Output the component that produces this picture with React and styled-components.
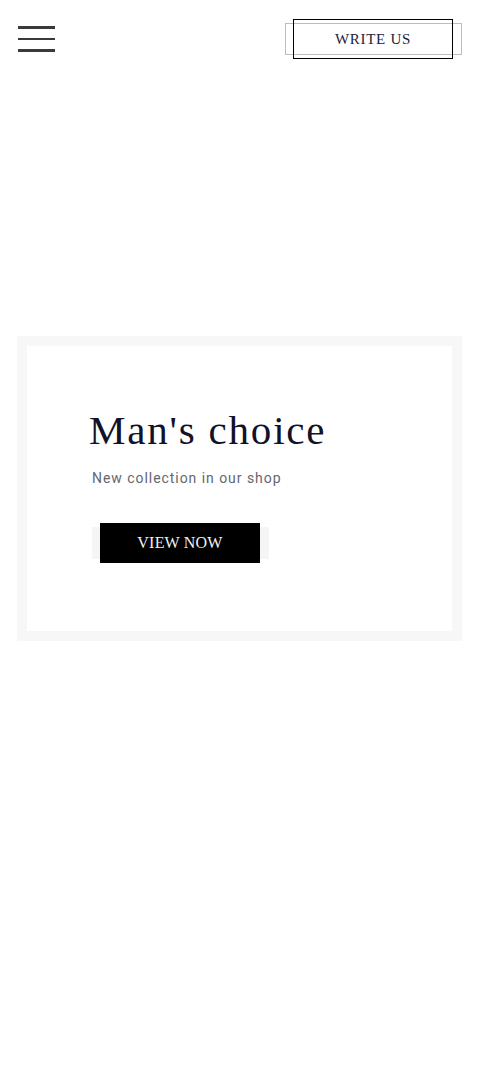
import React from "react";
import styled, { createGlobalStyle } from "styled-components";

const Global = createGlobalStyle`
  html, body { margin: 0; padding: 0; background: #ffffff; }
  body { font-family: "Liberation Serif", serif; }
  * { box-sizing: border-box; }
`;

const Page = styled.div`
  min-height: 1087px;
  background: #fff;
`;

const Header = styled.header`
  display: flex;
  align-items: center;
  justify-content: space-between;
  padding: 19px 27px 0 18px;
`;

const Burger = styled.button`
  display: flex;
  flex-direction: column;
  justify-content: space-between;
  width: 37px;
  height: 26px;
  padding: 0;
  border: 0;
  background: transparent;
  cursor: pointer;
`;

const Bar = styled.span`
  display: block;
  height: 2.6px;
  background: #3a3a3a;
`;

const FrameButton = styled.button`
  position: relative;
  z-index: 0;
  display: flex;
  align-items: center;
  justify-content: center;
  width: 160px;
  height: 40px;
  padding: 0;
  font-family: "Liberation Serif", serif;
  font-size: ${(p) => p.$size}px;
  letter-spacing: ${(p) => p.$ls}px;
  text-transform: uppercase;
  cursor: pointer;
  color: ${(p) => (p.$dark ? "#f2f2f2" : "#22223a")};
  background: transparent;
  border: 0;

  &::before {
    content: "";
    position: absolute;
    z-index: -1;
    left: -8px;
    right: -9px;
    top: 4px;
    bottom: 4px;
    background: ${(p) => (p.$dark ? "#f5f5f5" : "transparent")};
    border: ${(p) => (p.$dark ? "0" : "1px solid #bdbdbd")};
  }

  &::after {
    content: "";
    position: absolute;
    z-index: -1;
    inset: 0;
    background: ${(p) => (p.$dark ? "#000" : "transparent")};
    border: 1px solid #000;
  }
`;

const Main = styled.main`
  padding: 277px 18px 0 17px;
`;

const Card = styled.section`
  background: #f7f7f7;
  padding: 10px;
`;

const CardInner = styled.div`
  background: #fff;
  height: 285px;
  padding: 60px 0 0 65px;
  display: flex;
  flex-direction: column;
  align-items: flex-start;
`;

const Title = styled.h1`
  margin: 0 0 0 -3px;
  font-family: "Liberation Serif", serif;
  font-weight: 400;
  font-size: 41px;
  line-height: 48px;
  letter-spacing: 1.8px;
  color: #111128;
`;

const Subtitle = styled.p`
  margin: 14px 0 0 0;
  font-family: Roboto, "Liberation Sans", sans-serif;
  font-size: 14px;
  line-height: 20px;
  letter-spacing: 0.95px;
  color: #66666e;
`;

const ButtonWrap = styled.div`
  margin: 35px 0 0 8px;
`;

export default function App() {
  return (
    <Page>
      <Global />
      <Header>
        <Burger aria-label="Menu">
          <Bar />
          <Bar />
          <Bar />
        </Burger>
        <FrameButton $size={15} $ls={0.7}>Write us</FrameButton>
      </Header>
      <Main>
        <Card>
          <CardInner>
            <Title>Man's choice</Title>
            <Subtitle>New collection in our shop</Subtitle>
            <ButtonWrap>
              <FrameButton $dark $size={16} $ls={0.2}>View now</FrameButton>
            </ButtonWrap>
          </CardInner>
        </Card>
      </Main>
    </Page>
  );
}
